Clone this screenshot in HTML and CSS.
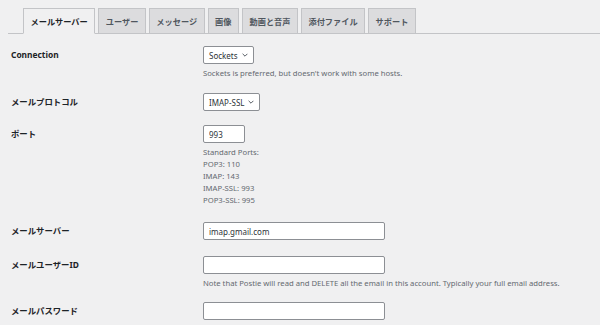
FILE: index.html
```
<!doctype html>
<html lang="ja">
    <head>
        <meta charset="UTF-8" />
        <meta name="viewport" content="width=device-width, initial-scale=1.0" />
        <title>Postie - メールサーバー</title>
        <link rel="stylesheet" href="styles.css">
    </head>
    <body>
        <div class="wrap">
            <nav class="nav-tab-wrapper">
                <a href="#" class="nav-tab active">メールサーバー</a>
                <a href="#" class="nav-tab">ユーザー</a>
                <a href="#" class="nav-tab">メッセージ</a>
                <a href="#" class="nav-tab">画像</a>
                <a href="#" class="nav-tab">動画と音声</a>
                <a href="#" class="nav-tab">添付ファイル</a>
                <a href="#" class="nav-tab">サポート</a>
            </nav>

            <div class="form-table">
                <div class="form-row">
                    <div class="form-label">Connection</div>
                    <div class="form-field">
                        <div class="select-box">
                            <span>Sockets</span>
                            <svg class="chevron" viewBox="0 0 10 6">
                                <path d="M1 1l4 4 4-4" />
                            </svg>
                        </div>
                        <p class="description">
                            Sockets is preferred, but doesn't work with some hosts.
                        </p>
                    </div>
                </div>

                <div class="form-row">
                    <div class="form-label">メールプロトコル</div>
                    <div class="form-field">
                        <div class="select-box">
                            <span>IMAP-SSL</span>
                            <svg class="chevron" viewBox="0 0 10 6">
                                <path d="M1 1l4 4 4-4" />
                            </svg>
                        </div>
                    </div>
                </div>

                <div class="form-row">
                    <div class="form-label">ポート</div>
                    <div class="form-field">
                        <input class="text-input small" type="text" value="993" />
                        <p class="description">
                            Standard Ports:<br />
                            POP3: 110<br />
                            IMAP: 143<br />
                            IMAP-SSL: 993<br />
                            POP3-SSL: 995
                        </p>
                    </div>
                </div>

                <div class="form-row spaced">
                    <div class="form-label">メールサーバー</div>
                    <div class="form-field">
                        <input class="text-input" type="text" value="imap.gmail.com" />
                    </div>
                </div>

                <div class="form-row spaced">
                    <div class="form-label">メールユーザーID</div>
                    <div class="form-field">
                        <input class="text-input" type="text" value="" />
                        <p class="description">
                            Note that Postie will read and DELETE all the email in this account. Typically your full email address.
                        </p>
                    </div>
                </div>

                <div class="form-row last">
                    <div class="form-label">メールパスワード</div>
                    <div class="form-field">
                        <input class="text-input" type="password" value="" />
                    </div>
                </div>
            </div>
        </div>
    </body>
</html>
```

FILE: styles.css
```
/* Reset */
*,
*::before,
*::after {
    margin: 0;
    padding: 0;
    box-sizing: border-box;
}

:root {
    --bg-color: #f0f0f1;
    --tab-bg: #dcdcde;
    --border-color: #c3c4c7;
    --input-border: #8c8f94;
    --text-color: #1d2327;
    --muted-color: #50575e;
    --desc-color: #646970;
}

body {
    font-family:
        "Noto Sans",
        "Noto Sans CJK JP",
        sans-serif;
    background: var(--bg-color);
    color: var(--text-color);
    font-size: 8px;
}

.wrap {
    padding-top: 8px;
}

/* Tabs */
.nav-tab-wrapper {
    display: flex;
    gap: 3px;
    margin-left: 8px;
    padding-left: 15px;
    border-bottom: 1px solid var(--border-color);
}

.nav-tab {
    display: block;
    height: 26px;
    line-height: 24px;
    padding: 0 6.5px;
    margin-bottom: -1px;
    background: var(--tab-bg);
    border: 1px solid var(--border-color);
    color: var(--muted-color);
    font-family: "Noto Sans CJK JP", sans-serif;
    font-size: 8.2px;
    font-weight: 600;
    text-decoration: none;
    white-space: nowrap;
}

.nav-tab.active {
    background: var(--bg-color);
    color: var(--text-color);
    font-weight: 700;
    border-bottom-color: var(--bg-color);
}

/* Form */
.form-table {
    padding: 5px 0 0 11px;
}

.form-row {
    display: flex;
    padding: 7px 0;
}

.form-row.spaced {
    padding-top: 9px;
}

.form-row.last {
    padding-top: 6px;
}

.form-label {
    width: 192px;
    flex-shrink: 0;
    line-height: 17px;
    font-size: 8.4px;
    font-weight: 700;
}

.form-field {
    display: flex;
    flex-direction: column;
    align-items: flex-start;
}

.select-box {
    display: flex;
    align-items: center;
    gap: 4px;
    height: 18px;
    padding: 0 5px;
    background: #fff;
    border: 1px solid var(--input-border);
    border-radius: 2px;
    font-size: 8px;
    color: #2c3338;
}

.chevron {
    width: 6px;
    height: 4px;
    fill: none;
    stroke: #50575e;
    stroke-width: 1.6;
}

.text-input {
    width: 182px;
    height: 18px;
    padding: 0 5px;
    background: #fff;
    border: 1px solid var(--input-border);
    border-radius: 2px;
    font-family: inherit;
    font-size: 8px;
    color: #2c3338;
    outline: none;
}

.text-input.small {
    width: 42px;
}

.description {
    margin-top: 3px;
    line-height: 12px;
    color: var(--desc-color);
    font-size: 7.7px;
}
```
